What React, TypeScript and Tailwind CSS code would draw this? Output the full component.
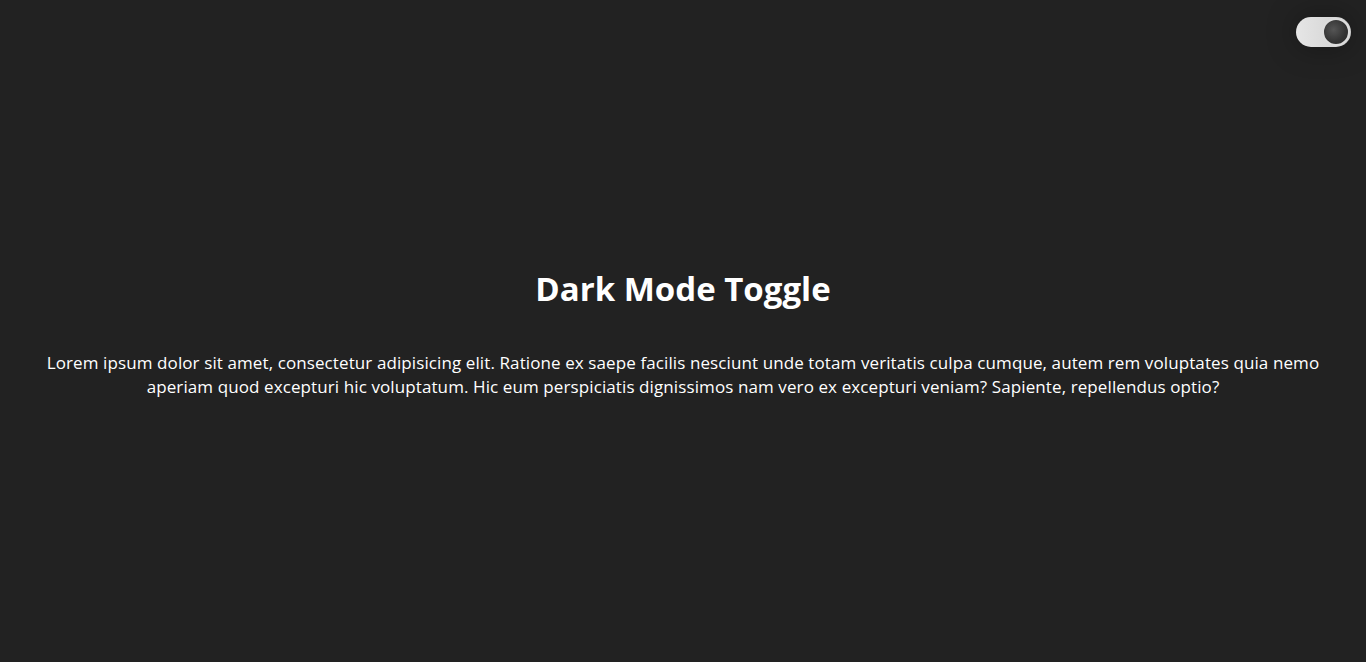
import React from "react";

export default function App() {
  return (
    <div
      className="relative w-full h-[662px] bg-[#222222] text-white flex flex-col items-center justify-center px-[45px] overflow-hidden"
      style={{ fontFamily: "'Open Sans', 'Noto Sans', sans-serif" }}
    >
      <div className="absolute top-[17px] right-[15px] w-[55px] h-[30px] rounded-full bg-gradient-to-r from-[#e6e6e6] to-[#cfcfcf] shadow-[0_0_30px_rgba(0,0,0,0.35)] flex items-center justify-end px-[1px]">
        <div className="w-[28px] h-[28px] rounded-full bg-[radial-gradient(circle_at_40%_40%,#555_0%,#333_60%,#2a2a2a_100%)] border-2 border-[#dcdcdc]" />
      </div>
      <h1 className="text-[33px] font-bold leading-[40px] mb-[42px] mt-[6px]">Dark Mode Toggle</h1>
      <p className="text-[17px] leading-[24px] tracking-[0.1px] text-center">
        Lorem ipsum dolor sit amet, consectetur adipisicing elit. Ratione ex saepe facilis nesciunt unde totam veritatis culpa cumque, autem rem voluptates quia nemo aperiam quod excepturi hic voluptatum. Hic eum perspiciatis dignissimos nam vero ex excepturi veniam? Sapiente, repellendus optio?
      </p>
    </div>
  );
}
